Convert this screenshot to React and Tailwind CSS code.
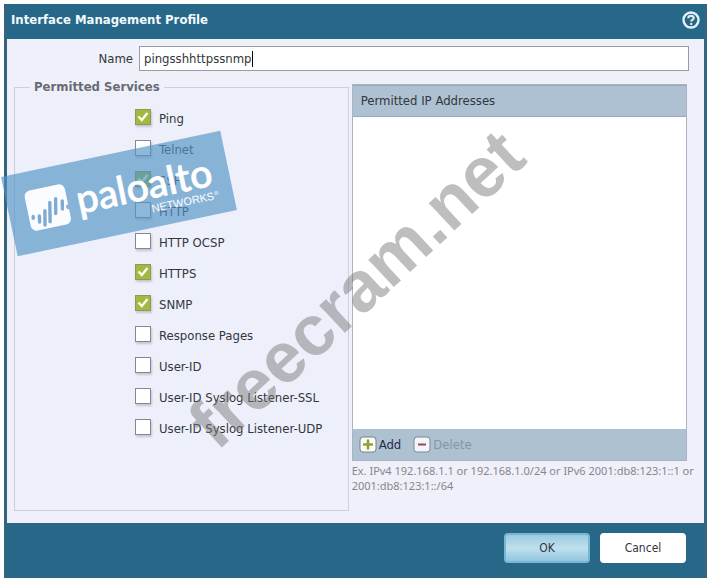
import React, { useState } from "react";

const SERVICES = [
  { id: "ping", label: "Ping", checked: true },
  { id: "telnet", label: "Telnet", checked: false },
  { id: "ssh", label: "SSH", checked: true },
  { id: "http", label: "HTTP", checked: false },
  { id: "http-ocsp", label: "HTTP OCSP", checked: false },
  { id: "https", label: "HTTPS", checked: true },
  { id: "snmp", label: "SNMP", checked: true },
  { id: "response-pages", label: "Response Pages", checked: false },
  { id: "user-id", label: "User-ID", checked: false },
  { id: "syslog-ssl", label: "User-ID Syslog Listener-SSL", checked: false },
  { id: "syslog-udp", label: "User-ID Syslog Listener-UDP", checked: false },
];

function HelpIcon() {
  return (
    <svg width="18" height="18" viewBox="0 0 18 18" fill="none">
      <circle cx="9" cy="9" r="7.5" fill="#2f6481" stroke="#dff3fb" strokeWidth="2.4" />
      <path
        d="M6.2 7.2c0-1.6 1.2-2.4 2.7-2.4s2.8.8 2.8 2.2c0 1.7-2.5 1.9-2.5 3.4"
        stroke="#d3ebf5"
        strokeWidth="2.2"
      />
      <circle cx="9.2" cy="12.9" r="1.2" fill="#d3ebf5" />
    </svg>
  );
}

function ServiceRow({ service, onToggle }) {
  return (
    <div className="flex h-[31px] items-center gap-2">
      <span className="relative flex h-4 w-4 shrink-0">
        <input
          id={service.id}
          type="checkbox"
          checked={service.checked}
          onChange={() => onToggle(service.id)}
          className="h-4 w-4 appearance-none border border-[#85898f] bg-white shadow-[1px_2px_2px_#c3c6cf] checked:border-[#8b9a5c] checked:bg-[#a3b741]"
        />
        {service.checked && (
          <svg className="pointer-events-none absolute inset-0" width="16" height="16" viewBox="0 0 16 16" fill="none">
            <path d="M3.5 7.5 6.8 11 12.5 4" stroke="#fdfff0" strokeWidth="2.4" />
          </svg>
        )}
      </span>
      <label htmlFor={service.id} className="pt-1 leading-4">
        {service.label}
      </label>
    </div>
  );
}

function Logo() {
  return (
    <svg
      className="pointer-events-none absolute left-0 top-32"
      width="240"
      height="130"
      viewBox="0 128 240 130"
    >
      <g transform="translate(1 177) rotate(-11.9)">
        <rect width="224" height="81" fill="#5293c5" fillOpacity="0.66" />
        <rect x="19" y="19" width="41" height="41" rx="6" fill="#fafcff" />
        <g stroke="#7fabd2" strokeWidth="3.4" strokeLinecap="round">
          <path d="M23.4 45.200 23 47" />
          <path d="M29.500 46 28.500 52" />
          <path d="M36 42 33.200 56" />
          <path d="M42.500 35 38.800 54" />
          <path d="M49 32.500 46 47" />
          <path d="M55 36 53.500 44" />
        </g>
        <circle cx="60" cy="43" r="2.5" fill="#8ab2d6" />
        <text
          x="69"
          y="52"
          fontFamily="Lato, sans-serif"
          fontSize="39"
          fontWeight="500"
          fill="#fff"
          stroke="#fff"
          strokeWidth="0.8"
        >
          paloalto
        </text>
        <text x="141" y="66" fontFamily="Liberation Sans, sans-serif" fontSize="11" fill="#fff">
          NETWORKS
        </text>
        <text x="205" y="62" fontFamily="Liberation Sans, sans-serif" fontSize="6" fill="#fff">
          ®
        </text>
      </g>
    </svg>
  );
}

function Watermark() {
  return (
    <svg
      className="pointer-events-none absolute left-36 top-20"
      width="430"
      height="410"
      viewBox="144 80 430 410"
    >
      <text
        transform="translate(217 452) rotate(-43)"
        fontFamily="Liberation Sans, sans-serif"
        fontSize="71"
        fontWeight="700"
        fill="#777"
        fillOpacity="0.48"
      >
        freecram.net
      </text>
    </svg>
  );
}

function App() {
  const [name, setName] = useState("pingsshhttpssnmp");
  const [services, setServices] = useState(SERVICES);

  const toggle = (id) => {
    setServices(services.map((s) => (s.id === id ? { ...s, checked: !s.checked } : s)));
  };

  return (
    <div className="relative min-h-screen bg-white p-1 pr-[5px] font-['DejaVu_Sans_Condensed','DejaVu_Sans',sans-serif] text-[13px] text-[#33363b]">
      <div className="border-x-[3px] border-b border-[#35647e] bg-[#276788]">
        <header className="flex h-[35px] items-center justify-between px-1 pb-1">
          <h1 className="font-bold text-[#f1fafd]">Interface Management Profile</h1>
          <button type="button" aria-label="Help">
            <HelpIcon />
          </button>
        </header>

        <main className="bg-[#eff0f9] px-[7px] pb-3 pt-[7px]">
          <div className="flex items-center pr-2">
            <label htmlFor="profile-name" className="w-[125px] shrink-0 pr-[6px] text-right">
              Name
            </label>
            <div className="flex h-[25px] min-w-0 flex-1 items-center border border-[#9a9ca5] bg-white px-1">
              <input
                id="profile-name"
                value={name}
                onChange={(e) => setName(e.target.value)}
                className="field-sizing-content bg-transparent outline-none"
              />
              <span className="h-4 w-px bg-black" />
            </div>
          </div>

          <div className="mt-2 flex gap-[3px]">
            <fieldset className="w-[49%] shrink-0 border border-[#cfced9] bg-[#edf0fa] pb-[68px] pl-[120px]">
              <legend className="-ml-[105px] px-1 font-bold leading-4 text-[#686b73]">
                Permitted Services
              </legend>
              <div className="pt-[6px]">
                {services.map((s) => (
                  <ServiceRow key={s.id} service={s} onToggle={toggle} />
                ))}
              </div>
            </fieldset>

            <section className="min-w-0 flex-1 pt-[5px]">
              <div className="mr-[10px] flex h-[377px] flex-col border border-[#aab4c0] bg-white">
                <h2 className="flex h-8 items-center border-y border-[#98a9b8] bg-[#aec1d2] px-2">
                  Permitted IP Addresses
                </h2>
                <div className="flex-1" />
                <div className="flex h-[31px] items-center gap-3 bg-[#aec1d0] px-[6px]">
                  <button type="button" className="flex items-center gap-[2px] text-[#1f2c4d]">
                    <svg width="18" height="17" viewBox="0 0 18 17">
                      <rect x="1" y="1" width="16" height="15" rx="3" fill="#fbfdf7" stroke="#74808c" />
                      <path d="M9 3.500v10M4 8.500h10" stroke="#8ea32f" strokeWidth="2.6" />
                    </svg>
                    Add
                  </button>
                  <button type="button" className="flex items-center gap-[2px] text-[#8795a3]">
                    <svg width="18" height="17" viewBox="0 0 18 17">
                      <rect x="1" y="1" width="16" height="15" rx="3" fill="#f2f6fa" stroke="#7b8794" />
                      <path d="M5 8.500h8" stroke="#9b4650" strokeWidth="2" />
                    </svg>
                    Delete
                  </button>
                </div>
              </div>
              <p className="pt-[2px] font-['Noto_Sans',sans-serif] text-[11px] leading-[15px] text-[#85878d]">
                Ex. IPv4 192.168.1.1 or 192.168.1.0/24 or IPv6 2001:db8:123:1::1 or 2001:db8:123:1::/64
              </p>
            </section>
          </div>
        </main>

        <footer className="flex h-[54px] items-center justify-end gap-[10px] pb-1 pr-[18px] text-xs">
          <button
            type="button"
            className="h-[30px] w-[86px] rounded border-2 border-[#79b6d5] bg-linear-to-b from-[#9acbe1] via-[#bfe0ee] to-[#93c6df]"
          >
            OK
          </button>
          <button type="button" className="h-[30px] w-[86px] rounded bg-white">
            Cancel
          </button>
        </footer>
      </div>

      <Logo />
      <Watermark />
    </div>
  );
}

export default App;
